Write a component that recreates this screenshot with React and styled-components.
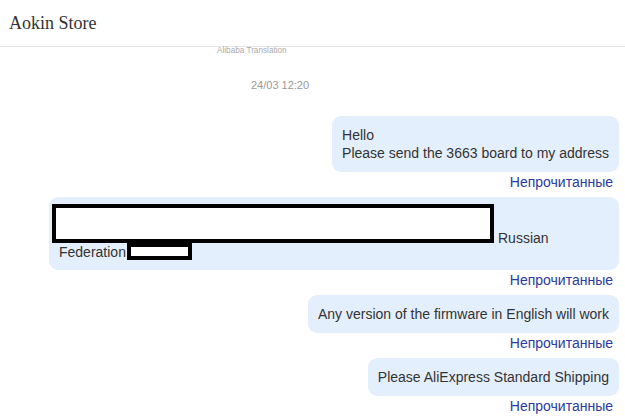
import React from 'react';
import styled, { createGlobalStyle } from 'styled-components';

const GlobalStyle = createGlobalStyle`
  html, body {
    margin: 0;
    padding: 0;
    background: #fff;
  }
  body {
    font-family: Arial, 'Liberation Sans', sans-serif;
    overflow: hidden;
  }
`;

const Page = styled.div`
  width: 625px;
  display: flex;
  flex-direction: column;

  & > * {
    flex-shrink: 0;
  }
`;

const Header = styled.header`
  height: 47px;
  border-bottom: 1px solid #e6e6e6;
  display: flex;
  align-items: center;
  padding: 0 9px;
  box-sizing: border-box;
`;

const StoreName = styled.h1`
  margin: 0;
  font-family: 'Liberation Serif', 'Times New Roman', serif;
  font-weight: normal;
  font-size: 18px;
  color: #333;
  line-height: 1;
`;

const Meta = styled.div`
  padding-left: ${p => p.$offset}px;
  font-size: ${p => p.$size}px;
  color: ${p => p.$color};
  line-height: ${p => p.$lh}px;
  margin-top: ${p => p.$top || 0}px;
`;

const Thread = styled.div`
  display: flex;
  flex-direction: column;
  align-items: flex-end;
  padding: 0 6px 0 0;
  margin-top: 24px;
`;

const Bubble = styled.div`
  background: #e4effd;
  border-radius: 9px;
  padding: ${p => (p.$custom ? '7px 10px 9px' : '10px')};
  font-size: 14px;
  line-height: 18px;
  color: #333;
  box-sizing: border-box;
  width: ${p => (p.$full ? '570px' : 'auto')};
  white-space: nowrap;
`;

const Status = styled.div`
  font-size: 14px;
  line-height: 16px;
  color: #2b3aa0;
  margin: 2px 6px 7px 0;
`;

const RedactRow = styled.div`
  display: flex;
  align-items: flex-end;
  height: 39px;
`;

const RedactBox = styled.span`
  display: inline-block;
  box-sizing: border-box;
  width: ${p => p.$w}px;
  height: ${p => p.$h}px;
  background: #fff;
  border: 4px solid #000;
  margin-left: ${p => p.$ml || 0}px;
  flex-shrink: 0;
`;

const InlineText = styled.span`
  line-height: 18px;
  margin-bottom: ${p => p.$mb || 0}px;
  margin-left: ${p => p.$ml || 0}px;
`;

const SecondRow = styled.div`
  display: flex;
  align-items: flex-start;
  height: 18px;
`;

const messages = [
  { id: 1, lines: ['Hello', 'Please send the 3663 board to my address'] },
  { id: 2, address: true },
  { id: 3, lines: ['Any version of the firmware in English will work'] },
  { id: 4, lines: ['Please AliExpress Standard Shipping'] },
];

const AddressBody = () => (
  <>
    <RedactRow>
      <RedactBox $w={442} $h={39} $ml={-7} />
      <InlineText $mb={-4} $ml={4}>Russian</InlineText>
    </RedactRow>
    <SecondRow>
      <InlineText>Federation,</InlineText>
      <RedactBox $w={65} $h={17} $ml={-3} />
    </SecondRow>
  </>
);

export default function App() {
  return (
    <Page>
      <GlobalStyle />
      <Header>
        <StoreName>Aokin Store</StoreName>
      </Header>
      <Meta $offset={217} $size={8.2} $color="#aaa" $lh={8}>Alibaba Translation</Meta>
      <Meta $offset={251} $size={11} $color="#999" $lh={14} $top={23}>24/03 12:20</Meta>
      <Thread>
        {messages.map(m => (
          <React.Fragment key={m.id}>
            {m.address ? (
              <Bubble $custom $full>
                <AddressBody />
              </Bubble>
            ) : (
              <Bubble>
                {m.lines.map((l, i) => (
                  <div key={i}>{l}</div>
                ))}
              </Bubble>
            )}
            <Status>Непрочитанные</Status>
          </React.Fragment>
        ))}
      </Thread>
    </Page>
  );
}
